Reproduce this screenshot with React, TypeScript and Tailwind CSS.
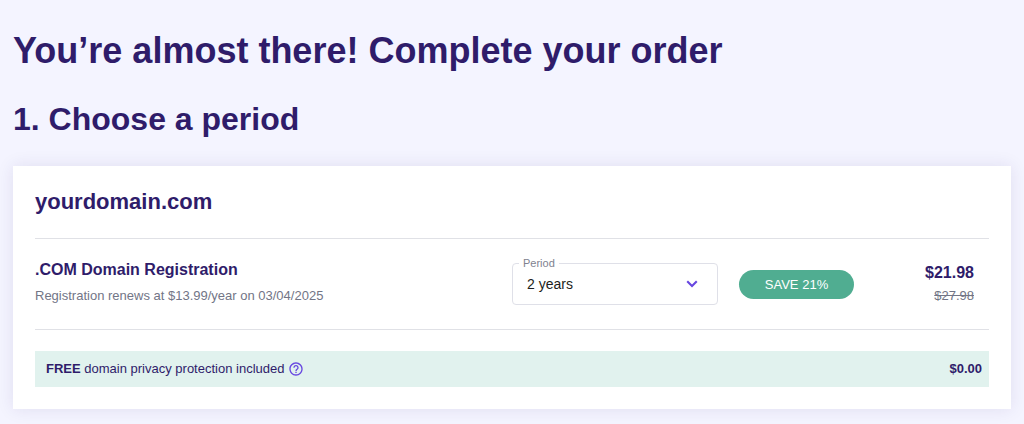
import { useState } from 'react'

type Plan = {
  years: number
  label: string
  price: number
  regular: number
}

const PLANS: Plan[] = [
  { years: 1, label: '1 year', price: 9.99, regular: 13.99 },
  { years: 2, label: '2 years', price: 21.98, regular: 27.98 },
  { years: 3, label: '3 years', price: 35.97, regular: 41.97 },
]

const money = (value: number) => `$${value.toFixed(2)}`

function HelpIcon() {
  return (
    <svg viewBox="0 0 24 24" className="size-4" fill="#6747e0" aria-hidden="true">
      <path d="M11 18h2v-2h-2v2zm1-16C6.48 2 2 6.48 2 12s4.48 10 10 10 10-4.48 10-10S17.52 2 12 2zm0 18c-4.41 0-8-3.59-8-8s3.59-8 8-8 8 3.59 8 8-3.59 8-8 8zm0-14c-2.21 0-4 1.79-4 4h2c0-1.1.9-2 2-2s2 .9 2 2c0 2-3 1.75-3 5h2c0-2.25 3-2.5 3-5 0-2.21-1.79-4-4-4z" />
    </svg>
  )
}

function PeriodSelect({ value, onChange }: { value: number; onChange: (years: number) => void }) {
  return (
    <fieldset className="mb-1.5 w-[206px] shrink-0 rounded border border-[#dfe0e8]">
      <legend className="ml-1.5 px-1 text-[11px] leading-3 text-[#80828f]">
        <label htmlFor="period">Period</label>
      </legend>
      <div className="-mt-1.5 grid items-center">
        <select
          id="period"
          value={value}
          onChange={(e) => onChange(Number(e.target.value))}
          className="col-start-1 row-start-1 h-[41px] w-full appearance-none bg-transparent pl-3.5 pr-9 text-sm text-[#1d1e20] outline-none"
        >
          {PLANS.map((p) => (
            <option key={p.years} value={p.years}>
              {p.label}
            </option>
          ))}
        </select>
        <svg
          viewBox="0 0 24 24"
          className="pointer-events-none col-start-1 row-start-1 mr-3.5 size-[22px] justify-self-end"
          fill="#6747e0"
          aria-hidden="true"
        >
          <path d="M16.4 8.2 12 12.6 7.6 8.2 6 9.8l6 6 6-6z" />
        </svg>
      </div>
    </fieldset>
  )
}

export default function App() {
  const [years, setYears] = useState(2)
  const plan = PLANS.find((p) => p.years === years) ?? PLANS[1]
  const saving = Math.round((1 - plan.price / plan.regular) * 100)

  return (
    <main className="min-h-screen bg-[#f4f4ff] px-[13px] pb-4 pt-7 font-['Liberation_Sans',Arial,sans-serif] text-[#2f1c6a]">
      <h1 className="text-4xl font-bold leading-[46px]">You’re almost there! Complete your order</h1>
      <h2 className="mt-6 text-[32px] font-bold leading-[42px]">1. Choose a period</h2>

      <section className="mt-[26px] bg-white px-[22px] py-[22px] shadow-[0_0_16px_rgba(47,28,106,0.1)]">
        <h3 className="pb-[22px] text-[22px] font-bold leading-7">yourdomain.com</h3>

        <div className="flex items-center border-y border-[#e0e1e6] py-[18px]">
          <div className="min-w-0 flex-1">
            <h4 className="text-base font-bold leading-6">.COM Domain Registration</h4>
            <p className="text-[13px] leading-7 text-[#727586]">
              Registration renews at $13.99/year on 03/04/2025
            </p>
          </div>
          <PeriodSelect value={years} onChange={setYears} />
          <span className="ml-[21px] w-[115px] shrink-0 rounded-full bg-[#50ad91] text-center text-[13px] leading-[29px] text-white">
            SAVE {saving}%
          </span>
          <div className="w-[135px] shrink-0 pr-[15px] text-right">
            <p className="text-base font-bold leading-6">{money(plan.price)}</p>
            <p className="text-[13px] leading-[22px] text-[#727586] line-through">{money(plan.regular)}</p>
          </div>
        </div>

        <div className="mt-[21px] flex h-9 items-center bg-[#e1f2ee] pl-[11px] pr-[7px] text-[13px]">
          <p>
            <strong>FREE</strong> domain privacy protection included
          </p>
          <button type="button" aria-label="About domain privacy protection" className="ml-1">
            <HelpIcon />
          </button>
          <strong className="ml-auto">$0.00</strong>
        </div>
      </section>
    </main>
  )
}
